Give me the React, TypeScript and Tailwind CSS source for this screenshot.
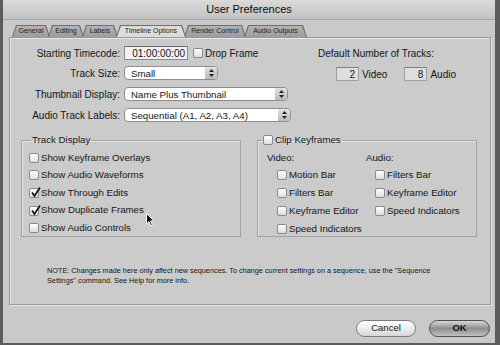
import React from "react";

function Check({ checked }: { checked?: boolean }) {
  return (
    <span className="relative flex size-[10px] shrink-0 rounded-[2px] border border-[#8a8a8a] bg-gradient-to-b from-white to-[#dedede]">
      {checked && (
        <svg className="absolute -top-[2px] left-[0px] size-[11px]" viewBox="0 0 11 11">
          <path d="M2 5.5 L4.5 9 L10 0.5" fill="none" stroke="#111" strokeWidth="1.7" />
        </svg>
      )}
    </span>
  );
}

function CheckRow({ label, checked, h = "h-[17.6px]" }: { label: string; checked?: boolean; h?: string }) {
  return (
    <div className={`flex items-center gap-[2px] ${h}`}>
      <Check checked={checked} />
      <span className="text-[9.7px] text-[#151515]">{label}</span>
    </div>
  );
}

function Popup({ value, width }: { value: string; width: string }) {
  return (
    <div className={`flex h-[14px] items-stretch overflow-hidden rounded-[4px] border border-[#8e8e8e] bg-white ${width}`}>
      <span className="flex-1 pl-[6px] text-[9.7px] leading-[13px] text-[#151515]">{value}</span>
      <span className="flex w-[12px] flex-col items-center justify-center gap-[2px] rounded-r-[3px] bg-gradient-to-b from-[#e4e4e4] to-[#b9b9b9]">
        <svg width="5" height="3" viewBox="0 0 5 3"><path d="M0 3 L2.5 0 L5 3Z" fill="#222" /></svg>
        <svg width="5" height="3" viewBox="0 0 5 3"><path d="M0 0 L2.5 3 L5 0Z" fill="#222" /></svg>
      </span>
    </div>
  );
}

function Tab({ label, width, active }: { label: string; width: string; active?: boolean }) {
  return (
    <div
      className={`-mr-[2px] h-[12px] bg-[#6f6f6f] pt-[1px] px-[1px] [clip-path:polygon(4px_0,calc(100%_-_4px)_0,100%_100%,0_100%)] ${width} ${active ? "relative z-10" : ""}`}
    >
      <div
        className={`flex h-full items-center justify-center text-[7px] text-[#222] [clip-path:polygon(4px_0,calc(100%_-_4px)_0,100%_100%,0_100%)] ${
          active ? "bg-[#dcdcdc]" : "bg-gradient-to-b from-[#b4b4b4] to-[#9c9c9c]"
        }`}
      >
        {label}
      </div>
    </div>
  );
}

export default function App() {
  return (
    <div className="relative flex h-[345px] w-[500px] bg-[#5c5c5c] pb-[2px] pl-[3px] pr-[5px] font-['Liberation_Sans',Arial,sans-serif]">
      <div className="flex flex-1 flex-col bg-[#c9c9c9]">
        {/* title bar */}
        <div className="flex h-[20px] items-center justify-center border-b border-[#a6a6a6] bg-gradient-to-b from-[#dadada] to-[#c2c2c2] text-[11px] text-[#0c0c0c]">
          User Preferences
        </div>

        {/* tabs */}
        <div className="ml-[9px] mt-[5px] flex h-[12px]">
          <Tab label="General" width="w-[38px]" />
          <Tab label="Editing" width="w-[36px]" />
          <Tab label="Labels" width="w-[36px]" />
          <Tab label="Timeline Options" width="w-[70px]" active />
          <Tab label="Render Control" width="w-[62px]" />
          <Tab label="Audio Outputs" width="w-[63px]" />
        </div>

        {/* panel */}
        <div className="ml-[6px] flex h-[268px] w-[482px] flex-col border border-[#9a9a9a] bg-[#cbcbcb] shadow-[inset_1px_1px_0_#e6e6e6,1px_1px_0_#e6e6e6]">
          <div className="mt-[8px] flex">
            <div className="flex w-[300px] flex-col">
              <div className="flex h-[14px] items-center">
                <span className="w-[111px] pr-[1px] text-right text-[10px] text-[#151515]">Starting Timecode:</span>
                <span className="ml-[3px] flex h-[14px] w-[64px] items-center justify-end border border-[#8a8a8a] border-t-[#6a6a6a] bg-[#f2f2f2] pr-[2px] text-[10px] text-[#151515]">
                  01:00:00:00
                </span>
                <span className="ml-[5px]">
                  <Check />
                </span>
                <span className="ml-[2px] text-[10px] text-[#151515]">Drop Frame</span>
              </div>
              <div className="mt-[6px] flex h-[14px] items-center">
                <span className="w-[111px] pr-[1px] text-right text-[10px] text-[#151515]">Track Size:</span>
                <span className="ml-[3px]">
                  <Popup value="Small" width="w-[94px]" />
                </span>
              </div>
              <div className="mt-[7px] flex h-[14px] items-center">
                <span className="w-[111px] pr-[1px] text-right text-[10px] text-[#151515]">Thumbnail Display:</span>
                <span className="ml-[3px]">
                  <Popup value="Name Plus Thumbnail" width="w-[164px]" />
                </span>
              </div>
              <div className="mt-[7px] flex h-[14px] items-center">
                <span className="w-[111px] pr-[1px] text-right text-[10px] text-[#151515]">Audio Track Labels:</span>
                <span className="ml-[3px]">
                  <Popup value="Sequential (A1, A2, A3, A4)" width="w-[167px]" />
                </span>
              </div>
            </div>

            <div className="ml-[8px] flex flex-col">
              <span className="mt-[2px] text-[10px] leading-[12px] text-[#151515]">Default Number of Tracks:</span>
              <div className="mt-[7px] flex h-[14px] items-center">
                <span className="ml-[18px] flex h-[14px] w-[23px] items-center justify-end border border-[#a0a0a0] border-t-[#808080] bg-[#dedede] pr-[3px] text-[10px] text-[#151515]">
                  2
                </span>
                <span className="ml-[3px] text-[10px] text-[#151515]">Video</span>
                <span className="ml-[17px] flex h-[14px] w-[23px] items-center justify-end border border-[#a0a0a0] border-t-[#808080] bg-[#dedede] pr-[3px] text-[10px] text-[#151515]">
                  8
                </span>
                <span className="ml-[3px] text-[10px] text-[#151515]">Audio</span>
              </div>
            </div>
          </div>

          {/* groups */}
          <div className="ml-[11px] mt-[12px] flex gap-[16px]">
            <fieldset className="h-[103px] w-[220px] border border-[#a2a2a2] pl-[7px] shadow-[inset_1px_1px_0_#e2e2e2]">
              <legend className="ml-[2px] px-[1px] text-[9.7px] leading-[12px] text-[#151515]">Track Display</legend>
              <div className="mt-[3px] flex flex-col">
                <CheckRow label="Show Keyframe Overlays" />
                <CheckRow label="Show Audio Waveforms" />
                <CheckRow label="Show Through Edits" checked />
                <CheckRow label="Show Duplicate Frames" checked />
                <CheckRow label="Show Audio Controls" />
              </div>
            </fieldset>
            <fieldset className="h-[103px] w-[220px] border border-[#a2a2a2] shadow-[inset_1px_1px_0_#e2e2e2]">
              <legend className="ml-[4px] flex items-center gap-[2px] px-[1px] text-[9.7px] leading-[12px] text-[#151515]">
                <Check />
                Clip Keyframes
              </legend>
              <div className="mt-[5px] flex">
                <div className="ml-[9px] flex w-[99px] flex-col">
                  <span className="h-[14px] text-[9.7px] text-[#151515]">Video:</span>
                  <div className="ml-[10px] mt-[1px] flex flex-col">
                    <CheckRow label="Motion Bar" h="h-[18px]" />
                    <CheckRow label="Filters Bar" h="h-[18px]" />
                    <CheckRow label="Keyframe Editor" h="h-[18px]" />
                    <CheckRow label="Speed Indicators" h="h-[18px]" />
                  </div>
                </div>
                <div className="flex flex-col">
                  <span className="h-[14px] text-[9.7px] text-[#151515]">Audio:</span>
                  <div className="ml-[9px] mt-[1px] flex flex-col">
                    <CheckRow label="Filters Bar" h="h-[18px]" />
                    <CheckRow label="Keyframe Editor" h="h-[18px]" />
                    <CheckRow label="Speed Indicators" h="h-[18px]" />
                  </div>
                </div>
              </div>
            </fieldset>
          </div>

          <p className="ml-[37px] mt-[29px] text-[7.3px] leading-[10px] text-[#151515]">
            NOTE: Changes made here only affect new sequences. To change current settings on a sequence, use the "Sequence
            <br />
            Settings" command. See Help for more info.
          </p>
        </div>

        {/* buttons */}
        <div className="mr-[5px] mt-[15px] flex justify-end gap-[13px]">
          <button className="h-[17px] w-[60px] rounded-full border border-[#7a7a7a] bg-gradient-to-b from-white via-[#ededed] to-[#d6d6d6] text-[9.5px] text-[#151515]">
            Cancel
          </button>
          <button className="h-[17px] w-[61px] rounded-full border border-[#4e4e4e] bg-gradient-to-b from-[#d8d8d8] via-[#8f8f8f] to-[#c2c2c2] text-[9.5px] font-bold text-[#111]">
            OK
          </button>
        </div>
      </div>

      {/* mouse pointer */}
      <svg className="absolute left-[146px] top-[213px]" width="9" height="14" viewBox="0 0 9 14">
        <path d="M0.5 0.5 L0.5 11 L3 8.6 L4.8 12.8 L6.4 12.1 L4.7 8 L8 8 Z" fill="#111" stroke="#fff" strokeWidth="1" />
      </svg>
    </div>
  );
}
